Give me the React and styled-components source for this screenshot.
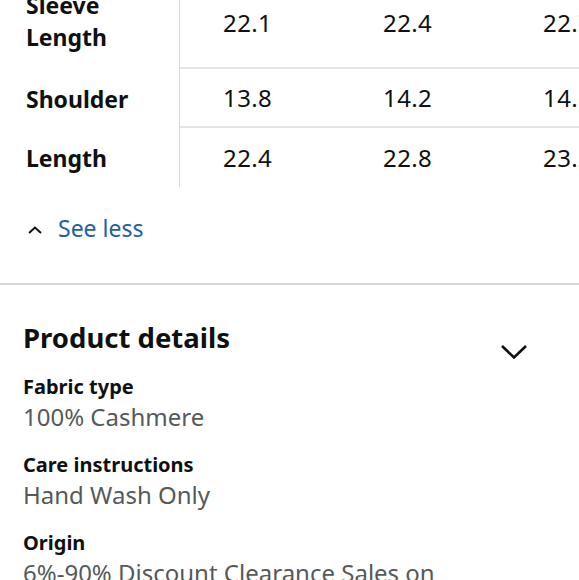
import React from "react"
import styled, { createGlobalStyle } from "styled-components"

const GlobalStyle = createGlobalStyle`
  html, body {
    margin: 0;
    padding: 0;
    background: #fff;
  }
  body {
    font-family: "Noto Sans", "Open Sans", Arial, sans-serif;
    color: #0f1111;
    overflow: hidden;
  }
`

const rows = [
  { label: ["Sleeve", "Length"], values: ["22.1", "22.4", "22.7"] },
  { label: ["Shoulder"], values: ["13.8", "14.2", "14.6"] },
  { label: ["Length"], values: ["22.4", "22.8", "23.2"] },
]

const details = [
  { name: "Fabric type", value: "100% Cashmere" },
  { name: "Care instructions", value: "Hand Wash Only" },
  { name: "Origin", value: "6%-90% Discount Clearance Sales on" },
]

const Page = () => (
  <>
    <GlobalStyle />
    <Wrapper>
      <SizeTable>
        {rows.map((row, i) => (
          <Row key={i}>
            <LabelCell $wrap={row.label.length > 1}>
              {row.label.map((l) => (
                <div key={l}>{l}</div>
              ))}
            </LabelCell>
            {row.values.map((v, j) => (
              <ValueCell key={j} $last={i === rows.length - 1}>
                {v}
              </ValueCell>
            ))}
          </Row>
        ))}
      </SizeTable>

      <Toggle>
        <svg width="14" height="8" viewBox="0 0 14 8">
          <path d="M1 7 L7 1.6 L13 7" fill="none" stroke="#0f1111" strokeWidth="2" />
        </svg>
        <span>See less</span>
      </Toggle>

      <Divider />

      <Section>
        <SectionHeader>
          <h2>Product details</h2>
          <svg width="28" height="16" viewBox="0 0 28 16">
            <path d="M2 2 L14 13.5 L26 2" fill="none" stroke="#0f1111" strokeWidth="2.6" />
          </svg>
        </SectionHeader>
        {details.map((d) => (
          <Detail key={d.name}>
            <dt>{d.name}</dt>
            <dd>{d.value}</dd>
          </Detail>
        ))}
      </Section>
    </Wrapper>
  </>
)

export default Page

const Wrapper = styled.div`
  margin-top: -23px;
  width: 579px;
  overflow: hidden;
`

const SizeTable = styled.div`
  display: flex;
  flex-direction: column;
  width: 680px;
`

const Row = styled.div`
  display: grid;
  grid-template-columns: 180px repeat(3, 160px);
`

const LabelCell = styled.div`
  padding: ${(p) => (p.$wrap ? "12px 0 16px 26px" : "13.5px 0 13.5px 26px")};
  border-right: 1px solid #d5d9d9;
  font-size: 23px;
  line-height: 32px;
  font-weight: 700;
  display: flex;
  flex-direction: column;
  justify-content: center;
`

const ValueCell = styled.div`
  display: flex;
  align-items: center;
  padding-left: 43px;
  font-size: 24px;
  line-height: 29px;
  letter-spacing: 0.4px;
  border-bottom: ${(p) => (p.$last ? "none" : "2px solid #e3e6e6")};
`

const Toggle = styled.div`
  display: flex;
  align-items: center;
  gap: 16px;
  margin: 26px 0 0 28px;
  height: 30px;

  svg {
    margin-top: 3px;
  }

  span {
    color: #2162a1;
    font-size: 23px;
    line-height: 30px;
  }
`

const Divider = styled.hr`
  margin: 40px 0 0;
  border: none;
  border-top: 2px solid #d5d9d9;
`

const Section = styled.div`
  padding: 36px 23px 0;
`

const SectionHeader = styled.div`
  display: flex;
  align-items: flex-start;
  justify-content: space-between;
  padding-right: 28px;

  h2 {
    margin: 0;
    font-size: 27.5px;
    line-height: 34px;
    font-weight: 700;
  }

  svg {
    margin-top: 23px;
    margin-bottom: -5px;
  }
`

const Detail = styled.dl`
  margin: 18px 0 0;

  dt {
    font-size: 20px;
    font-weight: 700;
    line-height: 28px;
  }

  dd {
    margin: 0;
    font-size: 24px;
    line-height: 32px;
    color: #565959;
  }
`
